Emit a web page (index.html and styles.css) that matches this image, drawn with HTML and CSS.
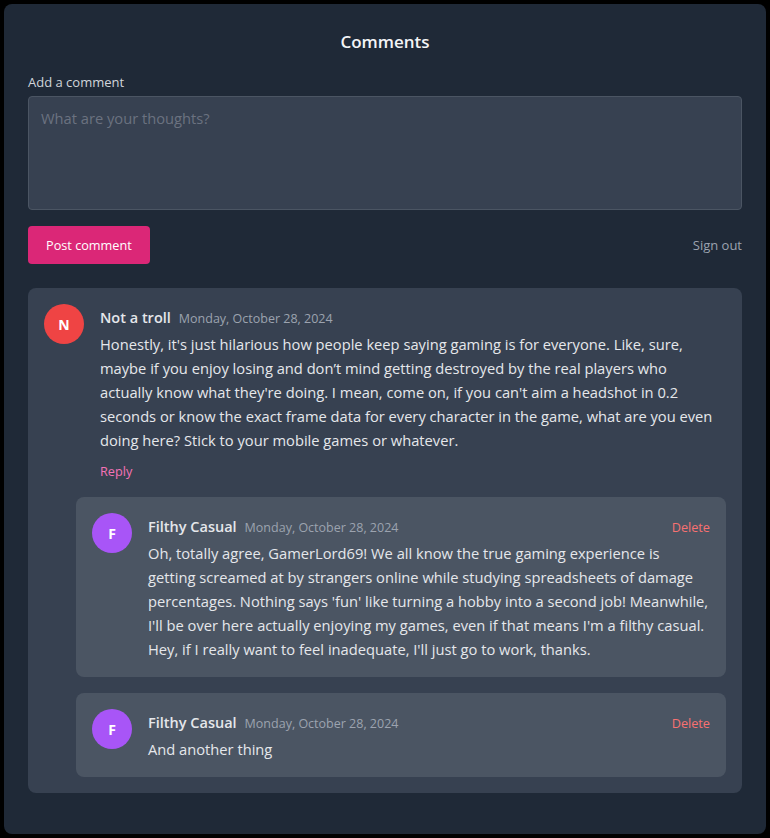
FILE: index.html
```html
<!DOCTYPE html>
<html>
<head>
<meta charset="utf-8">
<link rel="stylesheet" href="styles.css">
</head>
<body>
<div class="panel">
  <h2 class="title">Comments</h2>
  <label class="label" for="c">Add a comment</label>
  <textarea id="c" class="input" placeholder="What are your thoughts?"></textarea>
  <div class="actions">
    <button class="post">Post comment</button>
    <span class="signout">Sign out</span>
  </div>
  <div class="card">
    <div class="comment">
      <div class="avatar red">N</div>
      <div class="body">
        <div class="meta"><span class="name">Not a troll</span><span class="date">Monday, October 28, 2024</span></div>
        <p class="text">Honestly, it's just hilarious how people keep saying gaming is for everyone. Like, sure,<br>maybe if you enjoy losing and don’t mind getting destroyed by the real players who<br>actually know what they're doing. I mean, come on, if you can't aim a headshot in 0.2<br>seconds or know the exact frame data for every character in the game, what are you even<br>doing here? Stick to your mobile games or whatever.</p>
        <span class="reply">Reply</span>
      </div>
    </div>
    <div class="replies">
      <div class="card nested">
        <div class="comment">
          <div class="avatar purple">F</div>
          <div class="body">
            <div class="meta"><span class="name">Filthy Casual</span><span class="date">Monday, October 28, 2024</span><span class="delete">Delete</span></div>
            <p class="text">Oh, totally agree, GamerLord69! We all know the true gaming experience is getting screamed at by strangers online while studying spreadsheets of damage percentages. Nothing says 'fun' like turning a hobby into a second job! Meanwhile, I'll be over here actually enjoying my games, even if that means I'm a filthy casual. Hey, if I really want to feel inadequate, I'll just go to work, thanks.</p>
          </div>
        </div>
      </div>
      <div class="card nested">
        <div class="comment">
          <div class="avatar purple">F</div>
          <div class="body">
            <div class="meta"><span class="name">Filthy Casual</span><span class="date">Monday, October 28, 2024</span><span class="delete">Delete</span></div>
            <p class="text">And another thing</p>
          </div>
        </div>
      </div>
    </div>
  </div>
</div>
</body>
</html>
```

FILE: styles.css
```css
* { box-sizing: border-box; }
html, body { margin: 0; background: #000; }
body { padding: 4px; font-family: "Open Sans", "Noto Sans", sans-serif; color: #e5e7eb; }
.panel {
  background: #1f2937;
  border-radius: 8px;
  padding: 24px 24px 41px;
  min-height: 830px;
}
.title {
  margin: 0 0 16px;
  text-align: center;
  font-size: 17px;
  line-height: 28px;
  font-weight: 600;
  color: #f3f4f6;
}
.label {
  display: block;
  font-size: 13px;
  line-height: 20px;
  color: #d1d5db;
  margin-bottom: 4px;
}
.input {
  display: block;
  width: 100%;
  height: 114px;
  background: #374151;
  border: 1px solid #4b5563;
  border-radius: 4px;
  padding: 9px 12px;
  font-family: inherit;
  font-size: 14.7px;
  line-height: 24px;
  color: #e5e7eb;
  resize: none;
  outline: none;
}
.input::placeholder { color: #6b7280; }
.actions {
  display: flex;
  justify-content: space-between;
  align-items: center;
  margin-top: 16px;
}
.post {
  background: #db2777;
  color: #fff;
  border: 0;
  border-radius: 4px;
  height: 38px;
  padding: 0 18px;
  font-family: inherit;
  font-size: 12.7px;
}
.signout { font-size: 13px; color: #9ca3af; }
.card {
  background: #374151;
  border-radius: 8px;
  padding: 16px;
  margin-top: 24px;
}
.card.nested {
  background: #4b5563;
  margin-top: 0;
}
.comment { display: flex; gap: 16px; }
.avatar {
  flex: none;
  width: 40px;
  height: 40px;
  border-radius: 50%;
  display: flex;
  align-items: center;
  justify-content: center;
  font-size: 14px;
  font-weight: 700;
  color: #fff;
}
.red { background: #ef4444; }
.purple { background: #a855f7; }
.body { flex: 1; min-width: 0; }
.meta { display: flex; align-items: baseline; gap: 8px; line-height: 27px; }
.name { font-size: 14.5px; font-weight: 600; color: #e5e7eb; }
.date { font-size: 12.5px; color: #9ca3af; }
.delete { margin-left: auto; font-size: 12.7px; color: #f87171; }
.text {
  margin: 0;
  font-size: 14.7px;
  line-height: 24px;
  color: #e5e7eb;
}
.reply {
  display: inline-block;
  margin-top: 9px;
  font-size: 12.7px;
  line-height: 20px;
  color: #f472b6;
}
.replies {
  display: flex;
  flex-direction: column;
  gap: 16px;
  margin: 16px 0 0 32px;
}
```
